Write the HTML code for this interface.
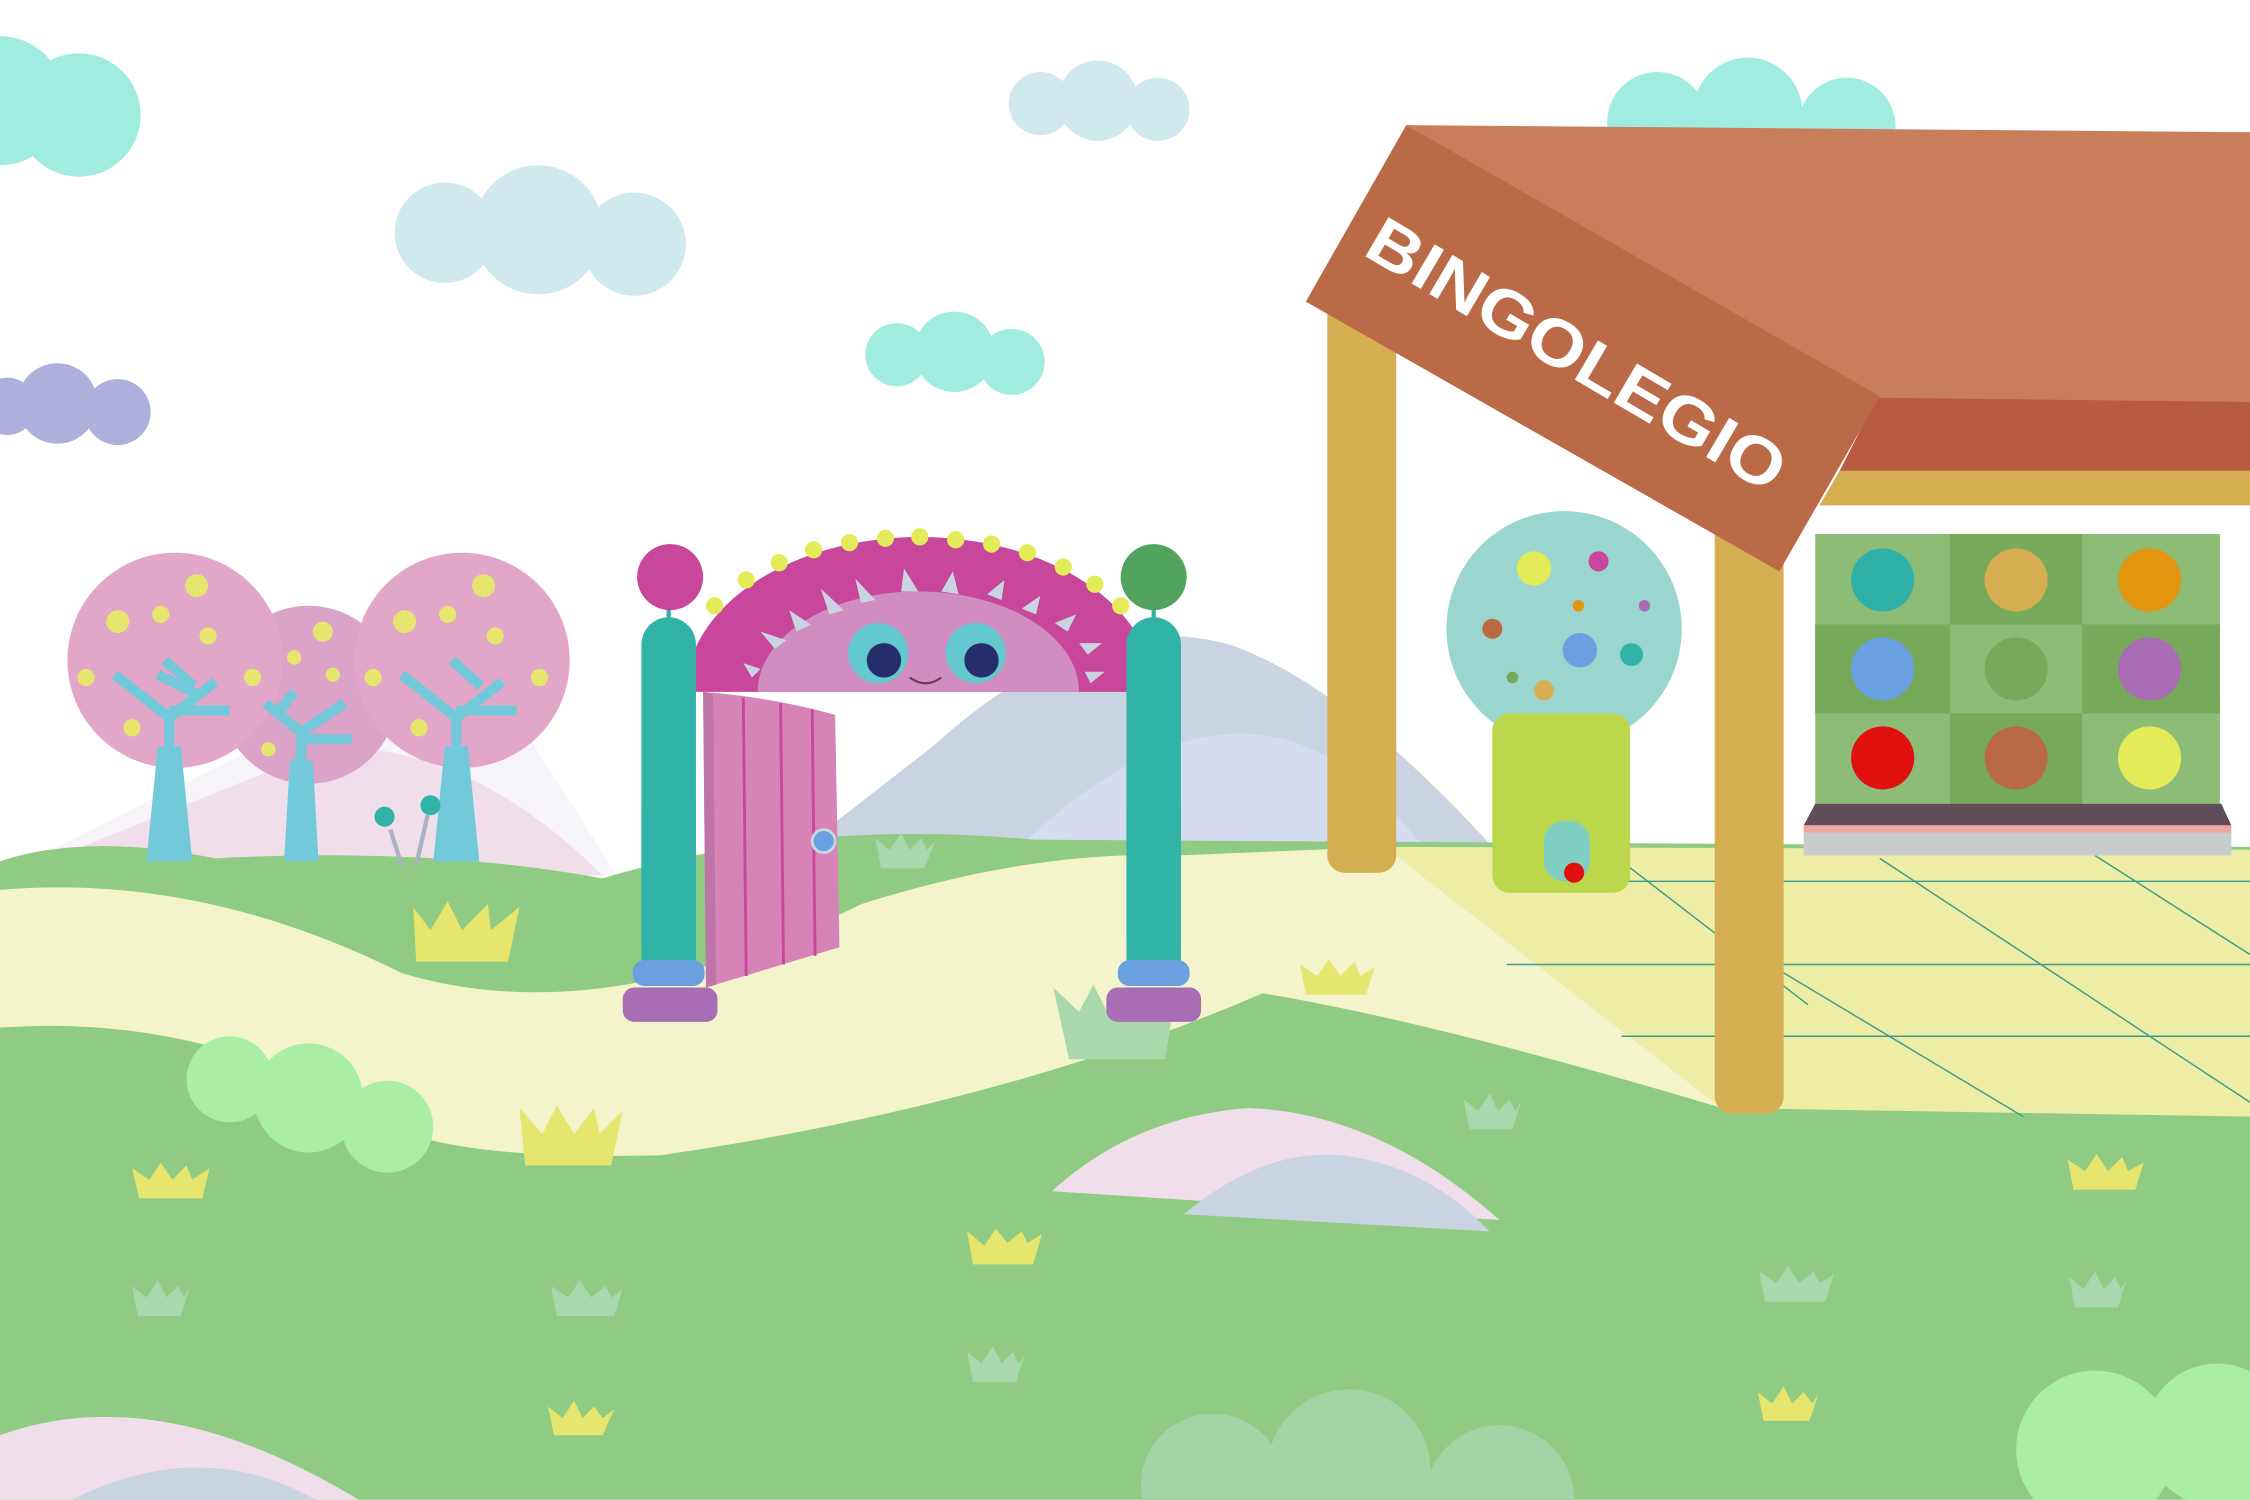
<!DOCTYPE html>
<html><head><meta charset="utf-8"><style>html,body{margin:0;padding:0;background:#fff}svg{display:block}</style></head>
<body>
<svg width="2250" height="1500" viewBox="0 0 1568 1045" xmlns="http://www.w3.org/2000/svg">
<rect width="1568" height="1045" fill="#fff"/>
<g fill="#a0ece0"><circle cx="0" cy="70" r="45"/><circle cx="55" cy="80" r="43"/>
<circle cx="625" cy="247" r="22"/><circle cx="665" cy="245" r="28"/><circle cx="705" cy="252" r="23"/>
<circle cx="1155" cy="85" r="35"/><circle cx="1218" cy="78" r="38"/><circle cx="1287" cy="88" r="34"/></g>
<g fill="#cfe9ef"><circle cx="310" cy="162" r="35"/><circle cx="375" cy="160" r="45"/><circle cx="442" cy="170" r="36"/>
<circle cx="725" cy="72" r="22"/><circle cx="765" cy="70" r="28"/><circle cx="807" cy="76" r="22"/></g>
<g fill="#adb0db"><circle cx="5" cy="283" r="20"/><circle cx="40" cy="281" r="28"/><circle cx="82" cy="287" r="23"/></g>
<path d="M0,610 L280,470 Q320,460 360,500 L430,610 Z" fill="#f7f5fa"/>
<path d="M20,605 L230,520 Q330,520 420,610 Z" fill="#f0dfea"/>
<path d="M560,590 L650,520 Q760,420 860,450 Q940,480 1040,590 Z" fill="#c9d3e2"/>
<path d="M700,600 Q830,470 930,530 Q970,560 1000,600 Z" fill="#d5dcf0"/>
<path d="M0,600 Q60,580 150,598 Q300,590 420,612 Q560,570 720,585 L1568,590 L1568,1045 L0,1045 Z" fill="#8fcb83"/>
<path d="M0,620 Q140,608 280,678 Q420,720 600,630 Q720,592 820,596 L965,590 L1200,772 Q1000,712 880,692 Q700,770 460,805 Q330,808 280,788 Q150,705 0,716 Z" fill="#f3f4cc"/>
<path d="M965,590 L1568,592 L1568,778 L1200,772 Z" fill="#eeeda6"/>
<g stroke="#3a9c8a" stroke-width="1"><line x1="1100" y1="614" x2="1568" y2="614"/><line x1="1050" y1="672" x2="1568" y2="672"/><line x1="1130" y1="722" x2="1568" y2="722"/>
<line x1="1130" y1="600" x2="1260" y2="700"/><line x1="1230" y1="670" x2="1410" y2="778"/><line x1="1310" y1="598" x2="1568" y2="768"/><line x1="1460" y1="596" x2="1568" y2="665"/></g>
<path d="M733,830 Q790,778 870,772 Q960,775 1045,850 Z" fill="#f0dfea"/>
<path d="M825,846 Q880,800 935,805 Q995,812 1038,858 Z" fill="#c9d3e2"/>
<path d="M0,1000 Q110,960 250,1045 L0,1045 Z" fill="#f0dfea"/>
<path d="M50,1045 Q140,1000 220,1045 Z" fill="#c9d3e2"/>
<g fill="#aaeea6"><circle cx="160" cy="752" r="30"/><circle cx="215" cy="765" r="38"/><circle cx="270" cy="785" r="32"/>
<circle cx="1460" cy="1010" r="55"/><circle cx="1545" cy="1000" r="50"/></g>
<g fill="#a3d4a6"><circle cx="845" cy="1035" r="50"/><circle cx="940" cy="1025" r="57"/><circle cx="1045" cy="1045" r="52"/></g>
<g fill="#e6e66f">
<path d="M290,670 L288,632 L300,648 L312,628 L322,648 L340,630 L342,648 L362,632 L354,670 Z"/>
<path d="M366,812 L362,772 L378,790 L388,770 L400,790 L414,772 L418,790 L434,774 L426,812 Z"/>
<path d="M97,835 L92,814 L104,822 L112,810 L120,822 L130,812 L134,822 L146,814 L141,835 Z"/>
<path d="M678,881 L674,858 L686,868 L694,856 L702,866 L712,858 L716,866 L726,860 L720,881 Z"/>
<path d="M910,693 L906,672 L918,680 L926,668 L934,680 L944,670 L948,680 L958,674 L952,693 Z"/>
<path d="M1445,829 L1441,808 L1453,816 L1461,804 L1469,816 L1479,806 L1483,816 L1494,810 L1488,829 Z"/>
<path d="M386,1000 L382,980 L392,988 L400,976 L406,988 L414,980 L420,988 L428,982 L420,1000 Z"/>
<path d="M1229,990 L1225,970 L1235,978 L1243,966 L1249,978 L1257,970 L1263,978 L1267,972 L1261,990 Z"/>
</g>
<g fill="#a8d8ac">
<path d="M745,738 L734,688 L752,705 L762,686 L772,706 L786,690 L796,706 L820,688 L812,738 Z"/>
<path d="M614,605 L610,584 L620,592 L628,580 L634,592 L642,584 L646,592 L652,586 L644,605 Z"/>
<path d="M96,917 L92,896 L102,904 L110,892 L116,904 L124,896 L128,904 L132,898 L126,917 Z"/>
<path d="M388,917 L384,896 L396,904 L404,892 L412,904 L422,896 L426,904 L434,898 L428,917 Z"/>
<path d="M678,963 L674,942 L684,950 L692,938 L698,950 L706,942 L710,950 L714,944 L708,963 Z"/>
<path d="M1024,787 L1020,766 L1030,774 L1038,762 L1044,774 L1052,766 L1056,774 L1060,768 L1054,787 Z"/>
<path d="M1230,907 L1226,886 L1238,894 L1246,882 L1254,894 L1264,886 L1268,894 L1278,888 L1272,907 Z"/>
<path d="M1446,911 L1442,890 L1452,898 L1460,886 L1466,898 L1474,890 L1478,898 L1482,892 L1476,911 Z"/>
</g>
<circle cx="215" cy="484" r="62" fill="#dca3c9"/>
<circle cx="122" cy="460" r="75" fill="#e2a6c9"/>
<circle cx="322" cy="460" r="75" fill="#e2a6c9"/>
<g stroke="#72c9da" stroke-width="7" fill="none">
<path d="M210,540 L210,510 L185,490 M210,510 L240,490 M210,515 L245,515 M195,495 L205,482"/>
<path d="M118,540 L118,500 L80,470 M118,500 L150,475 M118,495 L160,495 M110,470 L140,485 M115,460 L135,478"/>
<path d="M318,540 L318,500 L280,470 M318,500 L350,475 M318,495 L360,495 M315,460 L335,478"/></g>
<path d="M205,520 L210,600 L200,600 Z M114,520 L120,600 L102,600 Z M316,520 L334,600 L302,600 Z" fill="#72c9da"/>
<path d="M202,530 L218,530 L222,600 L198,600 Z M110,520 L126,520 L134,600 L102,600 Z M310,520 L326,520 L334,600 L302,600 Z" fill="#72c9da"/>
<g fill="#e6e66f"><circle cx="137" cy="408" r="8"/><circle cx="82" cy="433" r="8"/><circle cx="112" cy="428" r="6"/><circle cx="145" cy="443" r="6"/><circle cx="60" cy="472" r="6"/><circle cx="176" cy="472" r="6"/><circle cx="92" cy="507" r="6"/>
<circle cx="337" cy="408" r="8"/><circle cx="282" cy="433" r="8"/><circle cx="312" cy="428" r="6"/><circle cx="345" cy="443" r="6"/><circle cx="260" cy="472" r="6"/><circle cx="376" cy="472" r="6"/><circle cx="292" cy="507" r="6"/>
<circle cx="225" cy="440" r="7"/><circle cx="205" cy="458" r="5"/><circle cx="232" cy="470" r="5"/><circle cx="187" cy="522" r="5"/></g>
<g stroke="#a9b3c7" stroke-width="3"><line x1="272" y1="578" x2="280" y2="603"/><line x1="298" y1="568" x2="290" y2="603"/></g>
<circle cx="268" cy="569" r="7" fill="#31b4a7"/><circle cx="300" cy="561" r="7" fill="#31b4a7"/>
<!-- gate -->
<path d="M478,482 A163,108 0 0 1 804,482 Z" fill="#c8479a"/>
<path d="M528,482 A112,70 0 0 1 752,482 Z" fill="#d18dc2"/>
<g fill="#c9d3e2"><path d="M530,440 L548,446 L540,452Z M572,410 L588,425 L578,428Z M596,403 L610,418 L600,420Z M630,396 L640,412 L628,412Z M664,398 L668,414 L656,412Z M700,404 L698,418 L688,414Z M725,415 L722,428 L712,424Z M750,428 L744,440 L735,434Z M768,448 L758,456 L752,448Z M518,462 L530,466 L524,472Z M770,468 L760,476 L756,468Z M550,425 L565,435 L555,440Z"/></g>
<g fill="#e3ec58"><circle cx="498" cy="422" r="6"/><circle cx="520" cy="404" r="6"/><circle cx="543" cy="392" r="6"/><circle cx="567" cy="383" r="6"/><circle cx="592" cy="378" r="6"/><circle cx="617" cy="375" r="6"/><circle cx="641" cy="374" r="6"/><circle cx="666" cy="376" r="6"/><circle cx="691" cy="379" r="6"/><circle cx="716" cy="385" r="6"/><circle cx="741" cy="395" r="6"/><circle cx="763" cy="407" r="6"/><circle cx="781" cy="422" r="6"/></g>
<circle cx="612" cy="455" r="21" fill="#64c9cf"/><circle cx="616" cy="460" r="12" fill="#252d6b"/>
<circle cx="680" cy="455" r="21" fill="#64c9cf"/><circle cx="684" cy="460" r="12" fill="#252d6b"/>
<path d="M634,472 Q645,480 656,472" stroke="#6b3c60" stroke-width="1.5" fill="none"/>
<path d="M490,482 Q540,486 582,498 L585,660 L492,688 Z" fill="#d683b8"/>
<g stroke="#c8479a" stroke-width="2"><line x1="518" y1="486" x2="520" y2="680"/><line x1="544" y1="490" x2="546" y2="672"/><line x1="566" y1="494" x2="568" y2="666"/></g>
<path d="M490,482 L497,484 L499,686 L492,688 Z" fill="#bd74a8"/>
<circle cx="574" cy="586" r="8" fill="#6aa0e0" stroke="#c9d3e2" stroke-width="2"/>
<line x1="466" y1="415" x2="466" y2="435" stroke="#31b4a7" stroke-width="3"/>
<line x1="804" y1="415" x2="804" y2="435" stroke="#31b4a7" stroke-width="3"/>
<rect x="447" y="430" width="38" height="245" rx="19" fill="#31b4a7"/>
<rect x="785" y="430" width="38" height="245" rx="19" fill="#31b4a7"/>
<rect x="447" y="560" width="38" height="115" fill="#31b4a7"/>
<rect x="785" y="560" width="38" height="115" fill="#31b4a7"/>
<circle cx="467" cy="402" r="23" fill="#c8479a"/>
<circle cx="804" cy="402" r="23" fill="#52a35e"/>
<rect x="441" y="669" width="50" height="18" rx="8" fill="#6aa0e0"/>
<rect x="779" y="669" width="50" height="18" rx="8" fill="#6aa0e0"/>
<rect x="434" y="688" width="66" height="24" rx="8" fill="#a86db4"/>
<rect x="771" y="688" width="66" height="24" rx="8" fill="#a86db4"/>
<!-- gumball -->
<circle cx="1090" cy="438" r="82" fill="#9ad6cf"/>
<g><circle cx="1069" cy="396" r="12" fill="#e3ec58"/><circle cx="1114" cy="391" r="7" fill="#c8479a"/><circle cx="1040" cy="438" r="7" fill="#b96a45"/><circle cx="1100" cy="422" r="4" fill="#e3960f"/><circle cx="1146" cy="422" r="4" fill="#a86db4"/><circle cx="1101" cy="453" r="12" fill="#6aa0e0"/><circle cx="1137" cy="456" r="8" fill="#31b4a7"/><circle cx="1054" cy="472" r="4" fill="#76a95a"/><circle cx="1076" cy="481" r="7" fill="#d4ae50"/></g>
<rect x="1040" y="497" width="96" height="125" rx="12" fill="#bcd74b"/>
<rect x="1076" y="572" width="32" height="42" rx="14" fill="#7fcfc3"/>
<circle cx="1097" cy="608" r="7" fill="#e0110f"/>
<!-- house -->
<rect x="925" y="200" width="48" height="408" rx="12" fill="#d4ae50"/>
<path d="M980,87 L1568,92 L1568,280 L1308,280 Z" fill="#c87e5a"/>
<path d="M1308,277 L1568,280 L1568,328 L1282,328 Z" fill="#b95b40"/>
<path d="M1282,328 L1568,328 L1568,352 L1268,352 Z" fill="#d4ae50"/>
<rect x="1195" y="340" width="48" height="436" rx="12" fill="#d4ae50"/>
<path d="M980,87 L1310,276 L1240,398 L910,210 Z" fill="#bb6a47"/>
<text x="1097" y="250" transform="rotate(30.5 1097 250)" text-anchor="middle" dominant-baseline="middle" font-family="Liberation Sans, sans-serif" font-weight="bold" font-size="46" fill="#fff" textLength="330" lengthAdjust="spacingAndGlyphs">BINGOLEGIO</text>
<rect x="1265" y="372" width="282" height="188" fill="#8cbc75"/>
<g fill="#76a95a"><rect x="1359" y="372" width="92" height="63"/><rect x="1265" y="435" width="94" height="62"/><rect x="1451" y="435" width="96" height="62"/><rect x="1359" y="497" width="92" height="63"/></g>
<circle cx="1312" cy="404" r="22" fill="#2fb1a7"/><circle cx="1405" cy="404" r="22" fill="#d4ae50"/><circle cx="1498" cy="404" r="22" fill="#e3960f"/>
<circle cx="1312" cy="466" r="22" fill="#6aa0e0"/><circle cx="1405" cy="466" r="22" fill="#76a95a"/><circle cx="1498" cy="466" r="22" fill="#a86db4"/>
<circle cx="1312" cy="528" r="22" fill="#e0110f"/><circle cx="1405" cy="528" r="22" fill="#b96a45"/><circle cx="1498" cy="528" r="22" fill="#e3ec58"/>
<path d="M1265,560 L1548,560 L1555,575 L1257,575 Z" fill="#5f4d57"/>
<rect x="1257" y="575" width="298" height="5" fill="#f0a4a4"/>
<rect x="1257" y="580" width="298" height="16" fill="#c9cccc"/>
</svg>
</body></html>
